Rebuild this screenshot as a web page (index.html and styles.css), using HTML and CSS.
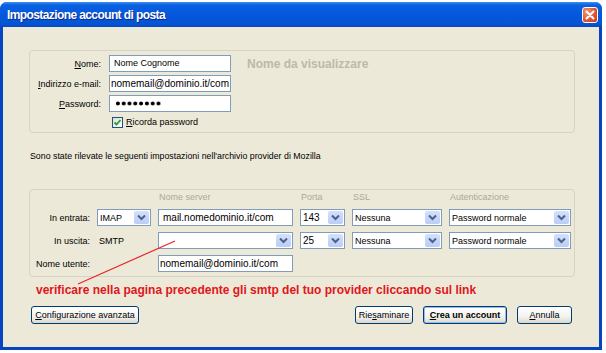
FILE: index.html
```html
<!DOCTYPE html>
<html lang="it">

<head>
    <meta charset="UTF-8">
    <meta name="viewport" content="width=device-width, initial-scale=1.0">
    <title>Impostazione account di posta</title>
    <link rel="stylesheet" href="styles.css">
</head>

<body>
    <div class="win">
        <div class="bar">
            <span class="title">Impostazione account di posta</span>
            <a href="javascript:;" class="close">
                <svg viewBox="0 0 14 14" width="14" height="14"><path d="M3.5 3.5l7 7M10.5 3.5l-7 7" stroke="#fff" stroke-width="2" stroke-linecap="round"/></svg>
            </a>
        </div>
        <div class="main">
            <div class="box who">
                <span class="lbl"><u>N</u>ome:</span>
                <div class="txt small">Nome Cognome</div>
                <div class="hint">Nome da visualizzare</div>
                <span class="lbl"><u>I</u>ndirizzo e-mail:</span>
                <div class="txt">nomemail@dominio.it/com</div>
                <span class="lbl"><u>P</u>assword:</span>
                <div class="txt"><span class="dots"></span></div>
                <div class="check">
                    <span class="cb"><svg viewBox="0 0 9 9" width="9" height="9"><path d="M1.5 4.5l2 2 4-4.5" fill="none" stroke="#21a121" stroke-width="1.8"/></svg></span>
                    <span><u>R</u>icorda password</span>
                </div>
            </div>

            <p class="note">Sono state rilevate le seguenti impostazioni nell'archivio provider di Mozilla</p>

            <div class="box srv">
                <span></span>
                <span></span>
                <span class="head">Nome server</span>
                <span class="head">Porta</span>
                <span class="head">SSL</span>
                <span class="head">Autenticazione</span>

                <span class="lbl">In entrata:</span>
                <div class="sel"><span>IMAP</span><svg class="dd" viewBox="0 0 15 13" width="15" height="13"><path d="M4 4.5l3.5 3.5 3.5-3.5" fill="none" stroke="#4d6185" stroke-width="2"/></svg></div>
                <div class="txt wide">mail.nomedominio.it/com</div>
                <div class="sel num"><span>143</span><svg class="dd" viewBox="0 0 15 13" width="15" height="13"><path d="M4 4.5l3.5 3.5 3.5-3.5" fill="none" stroke="#4d6185" stroke-width="2"/></svg></div>
                <div class="sel"><span>Nessuna</span><svg class="dd" viewBox="0 0 15 13" width="15" height="13"><path d="M4 4.5l3.5 3.5 3.5-3.5" fill="none" stroke="#4d6185" stroke-width="2"/></svg></div>
                <div class="sel"><span>Password normale</span><svg class="dd" viewBox="0 0 15 13" width="15" height="13"><path d="M4 4.5l3.5 3.5 3.5-3.5" fill="none" stroke="#4d6185" stroke-width="2"/></svg></div>

                <span class="lbl">In uscita:</span>
                <span class="proto">SMTP</span>
                <div class="sel"><span></span><svg class="dd" viewBox="0 0 15 13" width="15" height="13"><path d="M4 4.5l3.5 3.5 3.5-3.5" fill="none" stroke="#4d6185" stroke-width="2"/></svg></div>
                <div class="sel num"><span>25</span><svg class="dd" viewBox="0 0 15 13" width="15" height="13"><path d="M4 4.5l3.5 3.5 3.5-3.5" fill="none" stroke="#4d6185" stroke-width="2"/></svg></div>
                <div class="sel"><span>Nessuna</span><svg class="dd" viewBox="0 0 15 13" width="15" height="13"><path d="M4 4.5l3.5 3.5 3.5-3.5" fill="none" stroke="#4d6185" stroke-width="2"/></svg></div>
                <div class="sel"><span>Password normale</span><svg class="dd" viewBox="0 0 15 13" width="15" height="13"><path d="M4 4.5l3.5 3.5 3.5-3.5" fill="none" stroke="#4d6185" stroke-width="2"/></svg></div>

                <span class="lbl">Nome utente:</span>
                <span></span>
                <div class="txt">nomemail@dominio.it/com</div>
            </div>

            <p class="warn">verificare nella pagina precedente gli smtp del tuo provider cliccando sul link</p>

            <div class="btns">
                <a href="javascript:;" class="btn"><u>C</u>onfigurazione avanzata</a>
                <span class="fill"></span>
                <a href="javascript:;" class="btn">Rie<u>s</u>aminare</a>
                <a href="javascript:;" class="btn def"><u>C</u>rea un account</a>
                <a href="javascript:;" class="btn"><u>A</u>nnulla</a>
            </div>
        </div>
    </div>

    <svg class="mark" width="606" height="353" viewBox="0 0 606 353">
        <line x1="175" y1="241" x2="78" y2="284" stroke="#e8262b" stroke-width="1.2"/>
    </svg>
</body>

</html>
```

FILE: styles.css
```css
body {
    margin: 0;
    background: #fff;
    font-family: "Liberation Sans", Arial, sans-serif;
    font-size: 9px;
    color: #000;
}

.win {
    width: 602px;
    height: 348px;
    margin-top: 2px;
    box-sizing: border-box;
    padding-bottom: 3px;
    background: #0843c2;
    border-radius: 7px 7px 0 0;
    display: flex;
    flex-direction: column;
}

.bar {
    height: 25px;
    display: flex;
    align-items: center;
    padding: 0 4px 0 7px;
    border-radius: 7px 7px 0 0;
    background: linear-gradient(#3d8ef5 0, #0b61e0 3px, #0558dc 50%, #0453d3 90%, #0a48b8 100%);
}

.title {
    flex: 1;
    color: #fff;
    font-weight: bold;
    font-size: 12px;
    letter-spacing: -0.6px;
    text-shadow: 1px 1px 0 #0a2a8c;
}

.close {
    display: flex;
    align-items: center;
    justify-content: center;
    width: 14px;
    height: 14px;
    border: 1px solid #fff;
    border-radius: 3px;
    background: radial-gradient(circle at 30% 30%, #f0987a, #e0502c 60%, #c4391b);
}

.main {
    flex: 1;
    margin: 0 3px;
    padding: 23px 24px 0 26px;
    background: #ece9d8;
}

.box {
    width: 546px;
    box-sizing: border-box;
    border: 1px solid #d6d3c2;
    border-radius: 4px;
}

.lbl {
    grid-column: 1;
    text-align: right;
    white-space: nowrap;
}

.who {
    height: 83px;
    padding: 4px 0 0 8px;
    display: grid;
    grid-template-columns: 63px 122px auto;
    grid-template-rows: 17px 17px 17px 14px;
    column-gap: 8px;
    row-gap: 3px;
    align-items: center;
}

.txt {
    box-sizing: border-box;
    height: 17px;
    border: 1px solid #7f9db9;
    background: #fff;
    padding: 0 2px 0 1px;
    font-size: 10px;
    line-height: 15px;
    white-space: nowrap;
    overflow: hidden;
}

.txt.small {
    font-size: 9px;
    padding-left: 4px;
}

.txt.wide {
    padding-left: 4px;
}

.dots {
    display: inline-block;
    width: 46px;
    height: 5px;
    margin: 5px 0 0 4px;
    vertical-align: top;
    background: radial-gradient(circle, #000 1.6px, transparent 2.3px) 0 0 / 5.8px 5px;
}

.hint {
    padding-left: 8px;
    color: #bdb9ab;
    font-size: 12px;
    font-weight: bold;
}

.check {
    grid-column: 2;
    display: flex;
    align-items: center;
    gap: 3px;
    padding-left: 3px;
}

.cb {
    display: flex;
    align-items: center;
    justify-content: center;
    width: 11px;
    height: 11px;
    box-sizing: border-box;
    border: 1px solid #1c5180;
    background: linear-gradient(135deg, #dcdcd7, #fff);
}

.note {
    margin: 17px 0 0 1px;
    font-size: 8.8px;
    line-height: 13px;
}

.srv {
    margin-top: 26px;
    height: 88px;
    padding: 1px 0 0 4px;
    display: grid;
    grid-template-columns: 56px 54px 135px 45px 90px 122px;
    grid-template-rows: 12px 17px 17px 17px;
    column-gap: 7px;
    row-gap: 6px;
    align-items: center;
}

.head {
    color: #aca899;
    line-height: 12px;
    padding-left: 1px;
}

.proto {
    padding-left: 2px;
}

.sel {
    box-sizing: border-box;
    height: 17px;
    display: flex;
    align-items: center;
    border: 1px solid #7f9db9;
    background: #fff;
    padding: 0 1px 0 2px;
    white-space: nowrap;
}

.sel span {
    flex: 1;
    overflow: hidden;
}

.sel.num {
    font-size: 10px;
}

.dd {
    border-radius: 2px;
    background: linear-gradient(#d4e0fd, #b9cdf8);
}

.warn {
    margin: 6px 0 0 7px;
    color: #e2151b;
    font-size: 12px;
    font-weight: bold;
    line-height: 14px;
}

.btns {
    margin-top: 9px;
    display: flex;
    gap: 10px;
    padding: 0 3px 0 2px;
}

.fill {
    flex: 1;
}

.btn {
    box-sizing: border-box;
    height: 18px;
    padding: 0 5px;
    display: flex;
    align-items: center;
    justify-content: center;
    border: 1px solid #003c74;
    border-radius: 3px;
    background: linear-gradient(#fff, #f3f2ee 60%, #dcd8ca);
    color: #000;
    text-decoration: none;
    white-space: nowrap;
}

.btn:first-child {
    width: 108px;
}

.btn:nth-child(3) {
    width: 58px;
}

.btn.def {
    width: 84px;
    font-weight: bold;
    box-shadow: inset 0 0 0 1px #99b9ef;
}

.btn:last-child {
    width: 55px;
}

.mark {
    position: absolute;
    top: 0;
    left: 0;
    pointer-events: none;
}
```
